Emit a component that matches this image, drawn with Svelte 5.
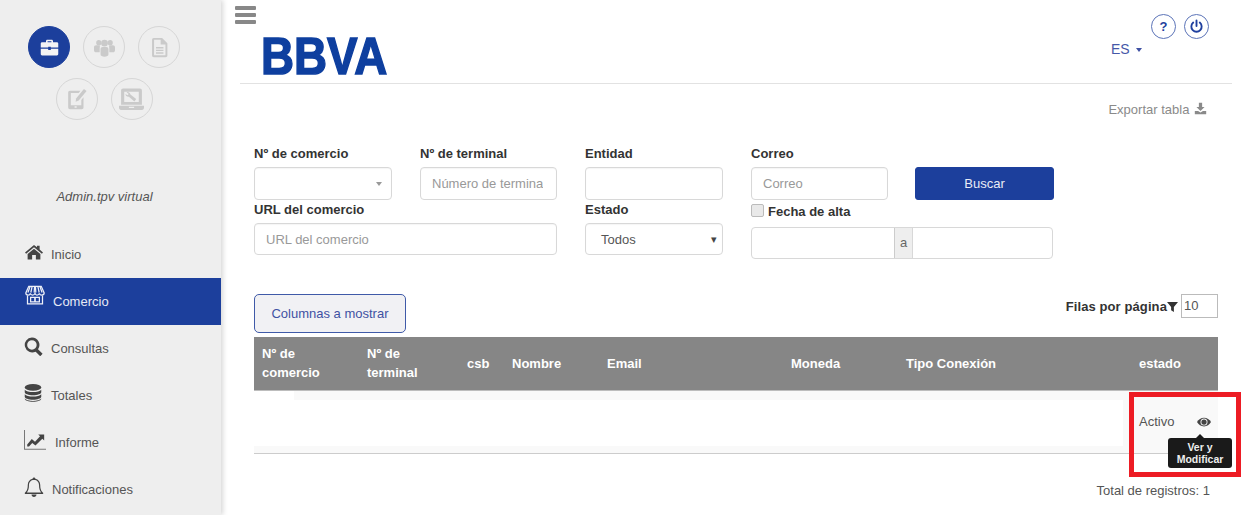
<script lang="ts">
  const modules = [
    { id: 'case', active: true },
    { id: 'users' },
    { id: 'doc' },
    { id: 'tablet' },
    { id: 'laptop' },
  ];

  // gap and lift differ per row because the original icons are not aligned
  const nav = [
    { label: 'Inicio', icon: 'home', size: 18, gap: 8, inset: 25, lift: 3 },
    { label: 'Comercio', icon: 'store', size: 20, gap: 8, inset: 25, lift: 7, active: true },
    { label: 'Consultas', icon: 'search', size: 19, gap: 8, inset: 24, lift: 2 },
    { label: 'Totales', icon: 'db', size: 18, gap: 9, inset: 24, lift: 3 },
    { label: 'Informe', icon: 'chart', size: 22, gap: 9, inset: 24, lift: 3 },
    { label: 'Notificaciones', icon: 'bell', size: 20, gap: 8, inset: 24, lift: 3 },
  ];

  const columns = [
    { label: 'Nº de comercio', width: 105 },
    { label: 'Nº de terminal', width: 100 },
    { label: 'csb', width: 45 },
    { label: 'Nombre', width: 95 },
    { label: 'Email', width: 184 },
    { label: 'Moneda', width: 115 },
    { label: 'Tipo Conexión', width: 233 },
    { label: 'estado', width: 87 },
  ];
</script>

<div class="page">
  <aside class="sidebar">
    <div class="modules">
      {#each modules as m}
        <div class="module" class:active={m.active}>
          <svg viewBox="0 0 24 24" fill="currentColor">
            {#if m.id === 'case'}
              <path d="M8 6V4.500C8 3.700 8.700 3 9.500 3h5c.8 0 1.500.7 1.500 1.500V6h4.500C21.300 6 22 6.700 22 7.500V12h-8.500v-.8h-3v.8H2V7.500C2 6.700 2.700 6 3.500 6zM9.800 6h4.400V4.800H9.800zM2 13.300h8.500v1.500h3v-1.500H22v6.200c0 .8-.7 1.500-1.500 1.500h-17C2.700 21 2 20.300 2 19.500z" />
            {:else if m.id === 'users'}
              <circle cx="5.500" cy="6.500" r="3" />
              <circle cx="18.500" cy="6.500" r="3" />
              <circle cx="12" cy="7" r="3.800" />
              <path d="M0 12c0-1.500 1-2.500 2.500-2.500h4C7 10.500 6.500 12 6.500 14v3.500H2.500C1 17.500 0 16.500 0 15zM24 12c0-1.500-1-2.500-2.500-2.500h-4c-.5 1-.0 2.500 0 4.500v3.500h4c1.500 0 2.500-1 2.500-2.500zM7.500 14c0-1.500 1-2.500 2.500-2.500h4c1.500 0 2.500 1 2.500 2.500v6c0 1.500-2 2.500-4.500 2.500S7.500 21.500 7.500 20z" />
            {:else if m.id === 'doc'}
              <path fill-rule="evenodd" d="M5.500 1H15l6 6v14c0 1.200-.8 2-2 2H5.500c-1.200 0-2-.8-2-2V3c0-1.200.8-2 2-2zm.3 2.200v17.600h13V8.500h-5.500V3.200zM8 11.500h8.500V13H8zm0 3h8.500V16H8zm0 3h8.500V19H8z" />
            {:else if m.id === 'tablet'}
              <path fill-rule="evenodd" d="M4.500 2h12l-2 2.500H5.500v14h12v-6l2.500-3V21c0 1.200-.8 2-2 2H4.500c-1.200 0-2-.8-2-2V4c0-1.200.8-2 2-2zm5.300 17.600h2.400v1.800H9.800z" />
              <path d="M20.500 0l3 2.300-9 10.700-3.500 1.500.5-3.700z" />
            {:else}
              <path fill-rule="evenodd" d="M4 1.500h16c1.200 0 2 .8 2 2V17H2V3.500c0-1.200.8-2 2-2zM5 4.500V14.500h14V4.500zM0 18h24v2c0 1.200-.8 2-2 2H2c-1.200 0-2-.8-2-2zm9.500 1v1.200h5V19z" />
              <path d="M7.300 5c1.700-.5 3.300.5 3.700 2.200l5.500 4.300-1.700 2.300-5.300-4.500c-1.700.3-3.200-.8-3.300-2.600l2 1.100 1.100-1z" />
            {/if}
          </svg>
        </div>
      {/each}
    </div>

    <p class="role">Admin.tpv virtual</p>

    <nav class="nav">
      {#each nav as item}
        <a
          class="nav-item"
          class:active={item.active}
          href="#top"
          style="gap: {item.gap}px; padding-left: {item.inset}px"
        >
          <svg
            class="nav-icon"
            viewBox="0 0 24 24"
            fill="currentColor"
            style="width: {item.size}px; height: {item.size}px; margin-top: {-item.lift * 2}px"
          >
            {#if item.icon === 'home'}
              <path d="M12 2.500L0 12.500l1.500 1.800L12 5.500l10.500 8.800 1.500-1.800-4.500-3.700V3.500h-3.500v2zM3.500 14.500L12 7.500l8.500 7V22H14.500v-6h-5v6H3.500z" />
            {:else if item.icon === 'store'}
              <g fill="none" stroke="currentColor" stroke-width="1.500">
                <path d="M4.500 1.500h15l3.500 8c0 1.500-1.500 2.500-3 2.500s-2.500-1-2.700-2c-.3 1-1.500 2-2.900 2S12.300 11 12 10c-.3 1-1.500 2-2.900 2s-2.400-1-2.700-2c-.2 1-1.200 2-2.700 2s-2.700-1-2.700-2.500z" />
                <path d="M3 12.500v10h18v-10M7 9l1.500-7M11 9l.5-7M13 9l-.5-7M17 9l-1.500-7M20.500 9L18 2M3.500 9L6 2" />
              </g>
              <path fill-rule="evenodd" d="M6 14h12v7H6zm1.500 1.500v4h3.500v-4zm5.500 0v4h3.500v-4z" />
            {:else if item.icon === 'search'}
              <path fill-rule="evenodd" d="M10 0.500a9.500 9.500 0 0 1 7.700 15l5.800 5.800-3 3-5.800-5.800A9.500 9.500 0 1 1 10 0.500zm0 3.500a6 6 0 1 0 0 12 6 6 0 0 0 0-12z" />
            {:else if item.icon === 'db'}
              <ellipse cx="12" cy="4.500" rx="11" ry="4.500" />
              <path d="M1 7.500c1.500 2 6 3.300 11 3.300s9.500-1.300 11-3.300V11c0 2.200-5 4-11 4S1 13.200 1 11zM1 13.500c1.500 2 6 3.300 11 3.300s9.500-1.300 11-3.300V17c0 2.200-5 4-11 4s-11-1.800-11-4zM1 19.300c1.500 2 6 3.200 11 3.200s9.500-1.200 11-3.200v.5c0 2.200-5 4-11 4s-11-1.800-11-4z" />
            {:else if item.icon === 'chart'}
              <path d="M0 1h1.100v20.500H24v1.100H0z" fill="#777" />
              <path d="M3.500 17l5-6 3.500 2.800L17.500 8 15.500 6H22v6.500l-2-2-7.500 7.500-3.500-2.800-3.500 4H3.500z" />
            {:else}
              <path fill-rule="evenodd" d="M12 0.500c.9 0 1.600.7 1.700 1.500 3.500.8 5.800 3.800 5.800 7.500 0 5.500 1.500 7.500 3.500 9.500v1.500H1V19c2-2 3.500-4 3.500-9.500C4.500 5.800 6.800 2.800 10.300 2c.1-.8.800-1.500 1.700-1.500zm0 3.200c-3.700 0-6 2.500-6 6 0 4.500-1 7-2.500 8.800h17C19 16.700 18 14.200 18 9.700c0-3.500-2.300-6-6-6zM9 21h6c0 1.700-1.300 3-3 3s-3-1.300-3-3z" />
            {/if}
          </svg>
          <span>{item.label}</span>
        </a>
      {/each}
    </nav>
  </aside>

  <main class="main">
    <header class="header">
      <div>
        <div class="burger"><span></span><span></span><span></span></div>
        <div class="logo">BBVA</div>
      </div>
      <div class="user">
        <div class="round-btns">
          <span class="round">?</span>
          <span class="round">
            <svg viewBox="0 0 16 16" width="15" height="15" fill="none" stroke="#1f3f9e" stroke-width="2" stroke-linecap="round">
              <path d="M8 1.500v6M4.500 3.800a5.500 5.500 0 1 0 7 0" />
            </svg>
          </span>
        </div>
        <div class="lang">ES <i class="caret"></i></div>
      </div>
    </header>

    <div class="export">
      Exportar tabla
      <svg viewBox="0 0 16 16" width="13" height="13" fill="#8a8a8a">
        <path d="M6 1h4v5h3L8 11 3 6h3zM1 11h4l3 2 3-2h4v4H1z" />
      </svg>
    </div>

    <form class="filters">
      <div class="field">
        <label for="f-com">Nº de comercio</label>
        <div class="input select-fake" id="f-com"><i class="caret grey"></i></div>
      </div>
      <div class="field">
        <label for="f-term">Nº de terminal</label>
        <input class="input" id="f-term" placeholder="Número de terminal" />
      </div>
      <div class="field">
        <label for="f-ent">Entidad</label>
        <input class="input" id="f-ent" />
      </div>
      <div class="field">
        <label for="f-mail">Correo</label>
        <input class="input" id="f-mail" placeholder="Correo" />
      </div>
      <button class="search" type="button">Buscar</button>

      <div class="field wide lower">
        <label for="f-url">URL del comercio</label>
        <input class="input" id="f-url" placeholder="URL del comercio" />
      </div>
      <div class="field lower">
        <label for="f-est">Estado</label>
        <div class="input select-fake todos" id="f-est">Todos<i class="tri">▾</i></div>
      </div>
      <div class="field wide lower">
        <label class="check" for="f-alta"><input type="checkbox" id="f-alta" /> Fecha de alta</label>
        <div class="range">
          <span class="from"></span>
          <b>a</b>
          <span class="to"></span>
        </div>
      </div>
    </form>

    <div class="table-bar">
      <button class="columns-btn" type="button">Columnas a mostrar</button>
      <div class="per-page">
        <span>Filas por página</span>
        <svg viewBox="0 0 12 12" width="11" height="11" fill="#333"><path d="M0 1h12L7.500 6.500V12l-3-2V6.500z" /></svg>
        <span class="per-input">10</span>
      </div>
    </div>

    <table class="grid">
      <colgroup>
        {#each columns as c}
          <col style="width: {c.width}px" />
        {/each}
      </colgroup>
      <thead>
        <tr>
          {#each columns as c}
            <th>{c.label}</th>
          {/each}
        </tr>
      </thead>
      <tbody>
        <tr>
          <td class="hidden-cells" colspan="7"><div></div></td>
          <td class="status">
            Activo
            <svg class="eye" viewBox="0 0 24 16" width="14" height="10">
              <path fill="#444" d="M12 .5c5 0 9.500 3 12 7.500-2.500 4.500-7 7.500-12 7.500S2.500 12.500 0 8C2.500 3.500 7 .5 12 .5z" />
              <circle cx="12" cy="8" r="6" fill="#f9f9f9" />
              <circle cx="12" cy="8" r="4.500" fill="#444" />
            </svg>
            <div class="tooltip">Ver y Modificar</div>
            <div class="highlight"></div>
          </td>
        </tr>
      </tbody>
    </table>

    <div class="total">Total de registros: 1</div>
  </main>
</div>

<style>
  :global(body) {
    margin: 0;
    background: #fff;
    overflow: hidden;
  }

  .page {
    display: flex;
    height: 515px;
    overflow: hidden;
    font-family: 'Liberation Sans', Arial, sans-serif;
    font-size: 13px;
    color: #555;
  }

  .sidebar {
    flex: 0 0 221px;
    background: #eee;
    box-shadow: 2px 0 5px rgba(0, 0, 0, 0.16);
    padding-top: 26px;
    box-sizing: border-box;
    z-index: 1;
  }

  .modules {
    width: 180px;
    margin-left: 14px;
    display: flex;
    flex-wrap: wrap;
    justify-content: center;
    gap: 10px 13px;
  }

  .module {
    width: 42px;
    height: 42px;
    box-sizing: border-box;
    border-radius: 50%;
    border: 1px solid #d6d6d6;
    color: #cacaca;
    display: flex;
    align-items: center;
    justify-content: center;
  }

  .module.active {
    background: #1c3f9c;
    border-color: #1c3f9c;
    color: #f4f4f4;
  }

  .module svg {
    width: 21px;
    height: 21px;
  }

  .module:last-child svg {
    width: 25px;
    height: 25px;
  }

  .role {
    margin: 67px 0 0;
    padding-right: 12px;
    line-height: 20px;
    text-align: center;
    font-style: italic;
    color: #555;
  }

  .nav {
    margin-top: 24px;
  }

  .nav-item {
    display: flex;
    align-items: center;
    height: 47px;
    color: #555;
    text-decoration: none;
  }

  .nav-icon {
    color: #444;
    flex: none;
  }

  .nav-item span {
    margin-top: -1px;
  }

  .nav-item.active {
    background: #1c3f9c;
    color: #e6e9f5;
  }

  .nav-item.active .nav-icon {
    color: #eef0f8;
  }

  .main {
    flex: 1;
    min-width: 0;
    padding: 0 19px;
    box-sizing: border-box;
  }

  .header {
    height: 83px;
    border-bottom: 1px solid #e2e2e2;
    display: flex;
    justify-content: space-between;
  }

  .burger {
    margin: 6px 0 0 -5px;
    width: 21px;
    display: flex;
    flex-direction: column;
    gap: 3px;
  }

  .burger span {
    height: 4px;
    border-radius: 1px;
    background: #888;
  }

  .logo {
    margin: 6px 0 0 21px;
    font-size: 52px;
    line-height: 52px;
    font-weight: 700;
    color: #0e3f9f;
    transform: scaleX(0.88);
    transform-origin: left center;
    -webkit-text-stroke: 1.500px #0e3f9f;
  }

  .user {
    padding: 14px 23px 0 0;
    width: 98px;
  }

  .round-btns {
    display: flex;
    justify-content: flex-end;
    gap: 8px;
  }

  .round {
    width: 25px;
    height: 25px;
    box-sizing: border-box;
    border: 1.500px solid #5c74b8;
    border-radius: 50%;
    color: #1f3f9e;
    font-weight: 700;
    font-size: 13px;
    display: flex;
    align-items: center;
    justify-content: center;
  }

  .lang {
    margin-top: 1px;
    font-size: 14px;
    line-height: 18px;
    color: #4658a8;
  }

  .caret {
    display: inline-block;
    margin-left: 2px;
    vertical-align: middle;
    border-top: 4px solid #3f51a3;
    border-left: 3.500px solid transparent;
    border-right: 3.500px solid transparent;
  }

  .caret.grey {
    border-top-color: #999;
    margin: 0;
  }

  .export {
    margin: 17px 25px 0 0;
    text-align: right;
    line-height: 17px;
    color: #8a8a8a;
  }

  .export svg {
    vertical-align: -1px;
    margin-left: 1px;
  }

  .filters {
    margin: 28px 0 0 14px;
    display: grid;
    grid-template-columns: 138px 137px 138px 137px 139px;
    column-gap: 28px;
    align-items: start;
  }

  .field label {
    display: block;
    height: 21px;
    font-weight: 700;
    color: #333;
    line-height: 15px;
  }

  .input {
    display: block;
    width: 100%;
    height: 33px;
    box-sizing: border-box;
    padding: 0 13px 0 11px;
    border: 1px solid #d8d8d8;
    border-radius: 4px;
    background: #fff;
    font: inherit;
    color: #555;
    outline: none;
    box-shadow: inset 0 1px 1px rgba(0, 0, 0, 0.04);
  }

  .input::placeholder {
    color: #999;
    opacity: 1;
  }

  .wide {
    grid-column: span 2;
  }

  .lower {
    margin-top: 2px;
  }

  .lower .input {
    height: 32px;
  }

  .select-fake {
    display: flex;
    align-items: center;
    justify-content: flex-end;
    padding-right: 9px;
  }

  .todos {
    justify-content: space-between;
    padding: 0 5px 0 15px;
  }

  .tri {
    font-style: normal;
    font-size: 11px;
    color: #444;
  }

  .search {
    height: 33px;
    margin-left: -1px;
    width: 139px;
    border: 1px solid #1c3f9c;
    border-radius: 3px;
    background: #1c3f9c;
    color: #e9ecf6;
    font: inherit;
    align-self: end;
  }

  .check {
    display: flex !important;
    align-items: flex-start;
    gap: 4px;
    height: 25px !important;
    line-height: 20px !important;
  }

  .check input {
    appearance: none;
    width: 13px;
    height: 13px;
    margin: 2px 0 0;
    border: 1px solid #bbb;
    border-radius: 2px;
    background: #e9e9e9;
  }

  .range {
    display: flex;
    height: 32px;
    border: 1px solid #d8d8d8;
    border-radius: 4px;
    width: 302px;
    box-sizing: border-box;
  }

  .from {
    flex: 0 0 142px;
  }

  .to {
    flex: 1;
  }

  .range b {
    flex: 0 0 19px;
    box-sizing: border-box;
    background: #eee;
    border-left: 1px solid #ccc;
    border-right: 1px solid #d8d8d8;
    font-weight: 400;
    text-align: center;
    line-height: 30px;
    color: #666;
  }

  .table-bar {
    margin: 35px 14px 0;
    display: flex;
    justify-content: space-between;
    align-items: flex-start;
  }

  .columns-btn {
    width: 152px;
    height: 39px;
    border: 1px solid #3f5aa8;
    border-radius: 5px;
    background: #f1f1f4;
    color: #3f51a3;
    font: inherit;
    padding: 0;
  }

  .per-page {
    display: flex;
    align-items: center;
    font-weight: 700;
    color: #333;
    height: 24px;
    letter-spacing: 0.1px;
  }

  .per-input {
    margin-left: 3px;
    width: 37px;
    height: 24px;
    box-sizing: border-box;
    border: 1px solid #bbb;
    font-weight: 400;
    color: #555;
    padding-left: 2px;
    line-height: 22px;
    letter-spacing: 0;
  }

  .grid {
    margin: 4px 14px 0;
    width: 964px;
    table-layout: fixed;
    border-collapse: collapse;
    border-bottom: 1px solid #ccc;
  }

  th {
    height: 53px;
    padding: 0 8px;
    box-sizing: border-box;
    background: #868686;
    border-bottom: 1px solid #bdbdbd;
    color: #fff;
    font-weight: 700;
    line-height: 19px;
    text-align: left;
  }

  td {
    height: 62px;
    padding: 0;
    box-sizing: border-box;
    background: #f9f9f9;
  }

  .hidden-cells {
    padding: 9px 8px 7px 0;
    background:
      linear-gradient(#fff, #fff) 0 0 / 40px 9px no-repeat,
      #f9f9f9;
  }

  .hidden-cells div {
    height: 46px;
    background: #fff;
  }

  .status {
    position: relative;
    padding-left: 8px;
    color: #555;
    white-space: nowrap;
  }

  .eye {
    margin-left: 19px;
    vertical-align: -1px;
  }

  .tooltip {
    position: absolute;
    left: 37px;
    top: 47px;
    width: 64px;
    padding: 3px 0;
    box-sizing: border-box;
    border-radius: 3px;
    background: #1a1a1a;
    color: #eee;
    font-size: 10.500px;
    font-weight: 700;
    line-height: 12px;
    text-align: center;
    white-space: normal;
  }

  .tooltip::before {
    content: '';
    position: absolute;
    top: -4px;
    left: 28px;
    border-bottom: 4px solid #1a1a1a;
    border-left: 4px solid transparent;
    border-right: 4px solid transparent;
  }

  .highlight {
    position: absolute;
    left: -2px;
    top: 1px;
    width: 112px;
    height: 85px;
    box-sizing: border-box;
    border: 5px solid #ed1c24;
    pointer-events: none;
  }

  .total {
    margin: 28px 22px 0 0;
    text-align: right;
    line-height: 17px;
    color: #555;
  }
</style>
